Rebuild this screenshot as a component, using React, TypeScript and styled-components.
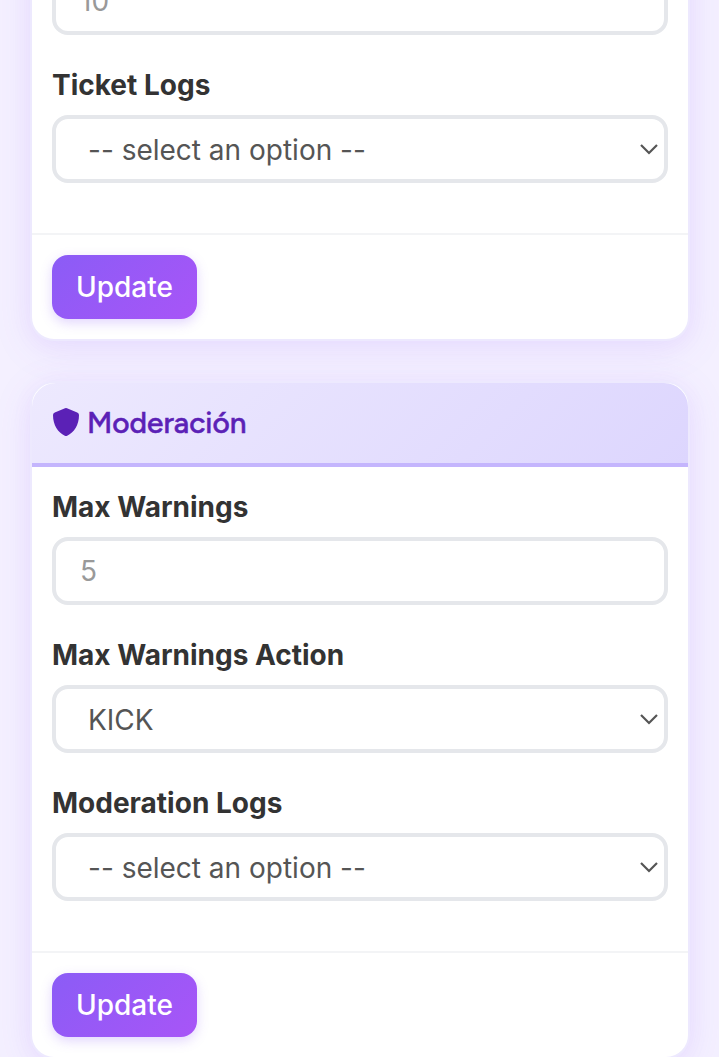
import React from 'react';
import styled, { createGlobalStyle } from 'styled-components';

const GlobalStyle = createGlobalStyle`
  * { box-sizing: border-box; }
  html, body { margin: 0; overflow: hidden; }
  body {
    font-family: Inter, "Liberation Sans", sans-serif;
    font-size: 28px;
    line-height: 42px;
    color: #333;
    background: #f4f0ff;
  }
`;

const Page = styled.main`
  height: 1057px;
  overflow: hidden;
  padding: 0 29px 0 30px;
  display: flex;
  flex-direction: column;
  gap: 40px;
  background: #f4f0ff;
`;

const Card = styled.section<{ $scrolled?: boolean }>`
  flex: none;
  margin-top: ${p => (p.$scrolled ? '-105px' : '0')};
  border: 2px solid #ede9fe;
  border-radius: 24px;
  background: #fff;
  box-shadow: 0 8px 40px rgba(139, 92, 246, 0.1), 0 4px 20px rgba(168, 85, 247, 0.06);
`;

const CardHeader = styled.header`
  display: flex;
  align-items: center;
  gap: 7px;
  height: 84px;
  padding: 0 20px;
  border-bottom: 4px solid #c4b5fd;
  border-radius: 24px 24px 0 0;
  background: linear-gradient(135deg, #ede9fe 0%, #ddd6fe 100%);
  color: #5b21b6;
`;

const ShieldIcon = styled.svg`
  margin-bottom: 2px;
`;

const Title = styled.h2`
  margin: 0;
  font: 500 29.8px/36px Figtree, "Noto Sans", sans-serif;
  -webkit-text-stroke: 0.5px currentColor;
`;

const CardBody = styled.div<{ $top?: number }>`
  padding: ${p => p.$top ?? 20}px 20px 20px;
`;

const Field = styled.div`
  margin-bottom: 30px;
`;

const Label = styled.label`
  display: block;
  padding-bottom: 10px;
  line-height: 40px;
  font-weight: 700;
`;

const Control = styled.div`
  position: relative;
  height: 68px;
`;

const Input = styled.input`
  display: block;
  width: 100%;
  height: 68px;
  padding: 0 24px;
  border: 4px solid #e5e7eb;
  border-radius: 16px;
  background: #fff;
  font: inherit;
  color: #555;
  &::placeholder { color: #999; opacity: 1; }
`;

const Select = styled.select`
  display: block;
  width: 100%;
  height: 68px;
  padding: 2px 32px 0;
  appearance: none;
  border: 4px solid #e5e7eb;
  border-radius: 16px;
  background: #fff;
  font: inherit;
  color: #555;
`;

const Arrow = styled.svg`
  position: absolute;
  right: 9px;
  top: 27px;
  pointer-events: none;
`;

const CardFooter = styled.footer`
  display: flex;
  padding: 20px;
  border-top: 2px solid #f3f4f6;
`;

const Button = styled.button`
  width: 145px;
  height: 64px;
  padding: 0;
  border: 0;
  border-radius: 16px;
  background: linear-gradient(135deg, #8b5cf6 0%, #a855f7 100%);
  box-shadow: 0 4px 12px rgba(139, 92, 246, 0.25);
  color: #fff;
  font: inherit;
  font-weight: 500;
`;

function NumberField({ id, label, hint }: { id: string; label?: string; hint: string }) {
  return (
    <Field>
      {label && <Label htmlFor={id}>{label}</Label>}
      <Input id={id} placeholder={hint} />
    </Field>
  );
}

function SelectField({ id, label, option }: { id: string; label: string; option: string }) {
  return (
    <Field>
      <Label htmlFor={id}>{label}</Label>
      <Control>
        <Select id={id}>
          <option>{option}</option>
        </Select>
        <Arrow width="20" height="14" viewBox="0 0 20 14" fill="none" stroke="#555" strokeWidth="2.2">
          <path d="M2 3 L10 11 L18 3" />
        </Arrow>
      </Control>
    </Field>
  );
}

export default function App() {
  return (
    <>
      <GlobalStyle />
      <Page>
        <Card $scrolled>
          <CardBody $top={70}>
            <NumberField id="tickets" hint="10" />
            <SelectField id="ticket-logs" label="Ticket Logs" option="-- select an option --" />
          </CardBody>
          <CardFooter>
            <Button>Update</Button>
          </CardFooter>
        </Card>
        <Card>
          <CardHeader>
            <ShieldIcon width="28" height="30" viewBox="0 0 28 30" fill="currentColor">
              <path d="M13 1.3 Q14 .8 15 1.3 L25.2 5.4 Q27 6.2 27 8 C27 18 22 25.6 15.2 28.7 Q14 29.3 12.8 28.7 C6 25.6 1 18 1 8 Q1 6.2 2.8 5.4 Z" />
            </ShieldIcon>
            <Title>Moderación</Title>
          </CardHeader>
          <CardBody>
            <NumberField id="warnings" label="Max Warnings" hint="5" />
            <SelectField id="action" label="Max Warnings Action" option="KICK" />
            <SelectField id="mod-logs" label="Moderation Logs" option="-- select an option --" />
          </CardBody>
          <CardFooter>
            <Button>Update</Button>
          </CardFooter>
        </Card>
      </Page>
    </>
  );
}
